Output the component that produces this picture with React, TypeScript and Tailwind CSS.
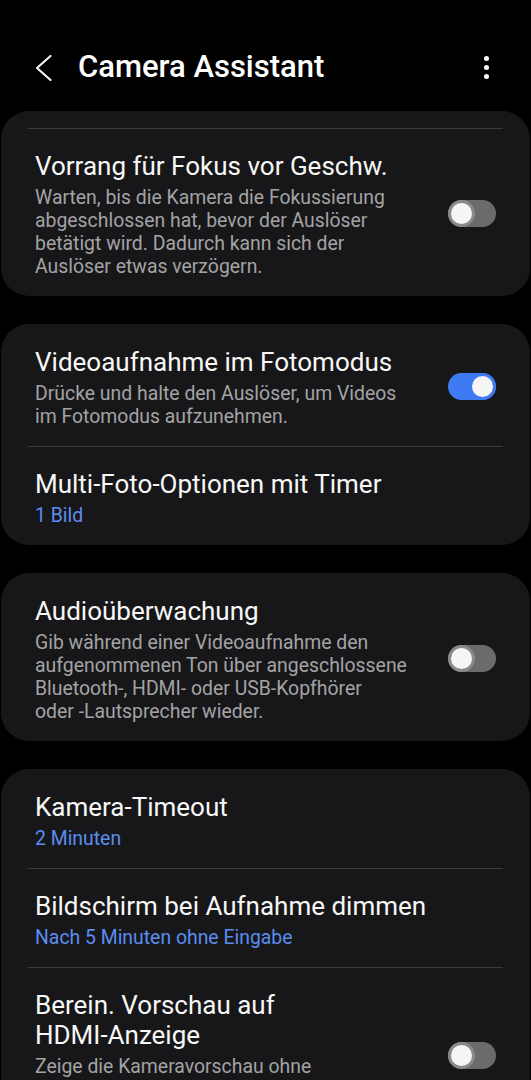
import React from 'react';

type Row = {
  title: React.ReactNode;
  desc?: React.ReactNode;
  value?: string;
  toggle?: 'on' | 'off';
};

function Toggle({ on }: { on: boolean }) {
  return (
    <div
      className={`relative h-[27px] w-[48px] shrink-0 rounded-full ${on ? 'bg-[#3e7bf3]' : 'bg-[#6b6b6d]'}`}
    >
      <div
        className={`absolute top-0 h-[27px] w-[27px] rounded-full border-[3px] bg-[#f5f5f5] ${
          on ? 'right-0 border-[#3e7bf3]' : 'left-0 border-[#8a8a8c]'
        }`}
      />
    </div>
  );
}

function SettingRow({ row, first }: { row: Row; first?: boolean }) {
  return (
    <div className={`flex items-center pl-[34px] pr-[34px] pb-[18px] ${first ? 'pt-[23px]' : 'pt-[22px]'}`}>
      <div className="flex-1 pr-[36px]">
        <div className="text-[26px] leading-[30px] text-[#f7f7f7]">{row.title}</div>
        {row.desc && (
          <div className="mt-[5px] text-[19.4px] leading-[23px] text-[#a3a3a5]">{row.desc}</div>
        )}
        {row.value && (
          <div className="mt-[5px] text-[19.4px] leading-[23px] text-[#5b8df0]">{row.value}</div>
        )}
      </div>
      {row.toggle && (
        <div className="-mt-[3px]">
          <Toggle on={row.toggle === 'on'} />
        </div>
      )}
    </div>
  );
}

function Divider() {
  return <div className="mx-[27px] h-px bg-[#3a3a3c]" />;
}

export default function App() {
  const cards: Row[][] = [
    [
      {
        title: 'Vorrang für Fokus vor Geschw.',
        desc: 'Warten, bis die Kamera die Fokussierung abgeschlossen hat, bevor der Auslöser betätigt wird. Dadurch kann sich der Auslöser etwas verzögern.',
        toggle: 'off',
      },
    ],
    [
      {
        title: 'Videoaufnahme im Fotomodus',
        desc: 'Drücke und halte den Auslöser, um Videos im Fotomodus aufzunehmen.',
        toggle: 'on',
      },
      { title: 'Multi-Foto-Optionen mit Timer', value: '1 Bild' },
    ],
    [
      {
        title: 'Audioüberwachung',
        desc: (
          <>
            Gib während einer Videoaufnahme den aufgenommenen Ton über angeschlossene Bluetooth-, HDMI- oder{' '}
            <span className="whitespace-nowrap">USB-Kopfhörer</span>{' '}
            <span className="whitespace-nowrap">oder -Lautsprecher</span> wieder.
          </>
        ),
        toggle: 'off',
      },
    ],
    [
      { title: 'Kamera-Timeout', value: '2 Minuten' },
      { title: 'Bildschirm bei Aufnahme dimmen', value: 'Nach 5 Minuten ohne Eingabe' },
      {
        title: (
          <>
            Berein. Vorschau auf <span className="whitespace-nowrap">HDMI-Anzeige</span>
          </>
        ),
        desc: 'Zeige die Kameravorschau ohne Schaltflächen und Symbole auf einem angeschlossenen Display an.',
        toggle: 'off',
      },
    ],
  ];

  return (
    <div className="h-[1080px] overflow-hidden bg-black font-['Roboto',sans-serif]">
      {/* Header */}
      <header className="flex h-[111px] items-center pt-[24px]">
        <button className="ml-[35px] flex h-[30px] w-[18px] items-center">
          <svg width="18" height="28" viewBox="0 0 18 28" fill="none">
            <path d="M15.5 2 L2 14 L15.5 26" stroke="#f2f2f2" strokeWidth="2.2" strokeLinecap="round" strokeLinejoin="round" />
          </svg>
        </button>
        <h1 className="ml-[25px] flex-1 text-[31px] font-medium text-white">Camera Assistant</h1>
        <div className="mr-[42px] flex flex-col items-center gap-[4px]">
          <span className="h-[5px] w-[5px] rounded-full bg-white" />
          <span className="h-[5px] w-[5px] rounded-full bg-white" />
          <span className="h-[5px] w-[5px] rounded-full bg-white" />
        </div>
      </header>

      <div className="flex flex-col gap-[28px] px-px">
        {cards.map((rows, ci) => (
          <div key={ci} className="overflow-hidden rounded-[28px] bg-[#171719]">
            {ci === 0 && (
              <>
                <div className="h-[17px]" />
                <Divider />
              </>
            )}
            {rows.map((row, ri) => (
              <React.Fragment key={ri}>
                {ri > 0 && <Divider />}
                <SettingRow row={row} first={ri === 0 && ci !== 0} />
              </React.Fragment>
            ))}
          </div>
        ))}
      </div>
    </div>
  );
}
